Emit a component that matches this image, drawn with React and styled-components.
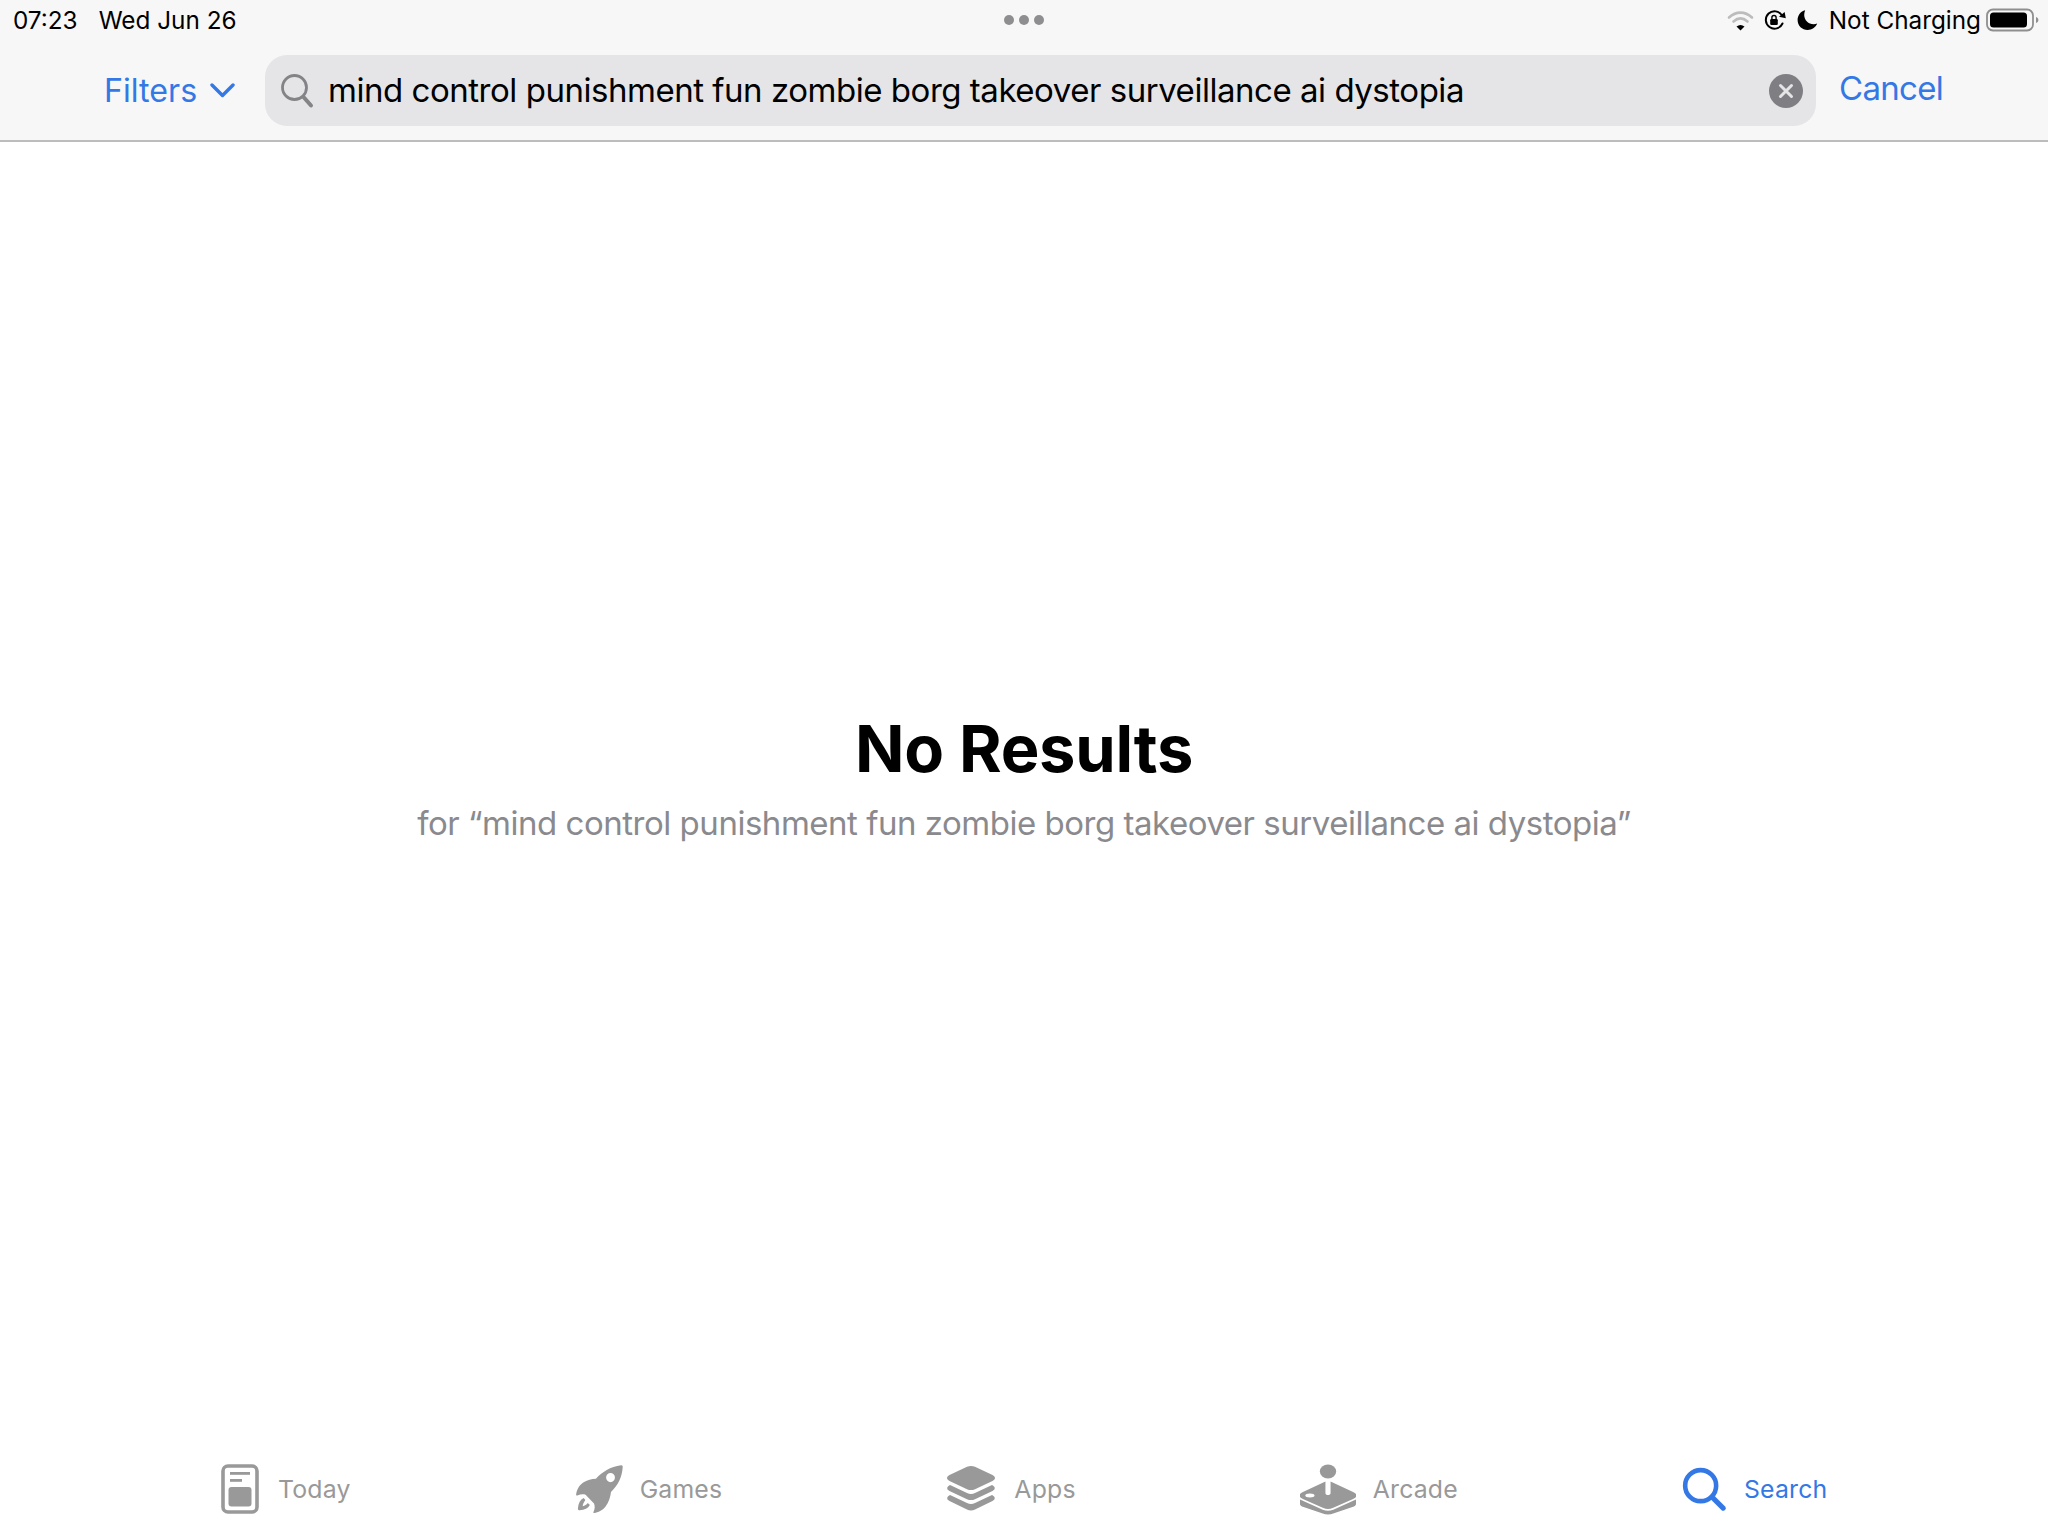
import styled, { createGlobalStyle } from 'styled-components';

const query = 'mind control punishment fun zombie borg takeover surveillance ai dystopia';
const blue = '#3478e6';
const tabGray = '#999999';

const GlobalStyle = createGlobalStyle`
  html, body {
    margin: 0;
    padding: 0;
    background: #fff;
  }

  body {
    font-family: Inter, 'Liberation Sans', sans-serif;
  }
`;

const Page = styled.div`
  width: 2048px;
  height: 1536px;
  display: flex;
  flex-direction: column;
  overflow: hidden;
`;

const Header = styled.header`
  height: 140px;
  background: #f7f7f7;
  border-bottom: 2px solid #bdbdbf;
  flex-shrink: 0;
`;

const StatusBar = styled.div`
  height: 38px;
  padding: 1px 9px 0 13px;
  display: grid;
  grid-template-columns: 1fr auto 1fr;
  align-items: center;
  font-size: 24.3px;
  color: #000;
`;

const StatusLeft = styled.div`
  display: flex;
  gap: 21px;
`;

const Dots = styled.div`
  display: flex;
  gap: 5px;
  margin-left: -4px;
`;

const Dot = styled.span`
  width: 10px;
  height: 10px;
  border-radius: 50%;
  background: #8e8e90;
`;

const StatusRight = styled.div`
  display: flex;
  align-items: center;
  justify-content: flex-end;
`;

const StatusIcon = styled.svg`
  display: block;
  margin-right: ${({ $gap }) => $gap}px;
`;

const ChargingLabel = styled.span`
  margin-right: 5px;
`;

const SearchRow = styled.div`
  height: 71px;
  margin-top: 16px;
  padding-left: 104px;
  display: flex;
  align-items: center;
`;

const FiltersButton = styled.div`
  width: 161px;
  display: flex;
  align-items: center;
  gap: 13px;
  color: ${blue};
  font-size: 32.2px;
  margin-top: -1px;
`;

const SearchField = styled.div`
  width: 1551px;
  height: 71px;
  padding: 0 13px 0 15px;
  box-sizing: border-box;
  display: flex;
  align-items: center;
  background: #e5e5e7;
  border-radius: 22px;
`;

const QueryText = styled.div`
  flex: 1;
  margin-left: 14px;
  margin-top: -1px;
  font-size: 33px;
  letter-spacing: -0.47px;
  color: #000;
  white-space: nowrap;
`;

const CancelButton = styled.div`
  margin-left: 23px;
  color: ${blue};
  font-size: 33px;
  letter-spacing: -0.7px;
  line-height: 71px;
  margin-top: -4px;
`;

const Main = styled.main`
  flex: 1;
  padding-top: 570px;
  display: flex;
  flex-direction: column;
  align-items: center;
`;

const Title = styled.h1`
  margin: 0;
  font-size: 65px;
  line-height: 74px;
  font-weight: 700;
  letter-spacing: -0.25px;
  color: #000;
`;

const Subtitle = styled.p`
  margin: 16px 0 0;
  font-size: 33px;
  line-height: 42px;
  letter-spacing: -0.48px;
  color: #8a8a8e;
  white-space: nowrap;
`;

const TabBar = styled.nav`
  height: 96px;
  padding-left: 221px;
  flex-shrink: 0;
  display: flex;
  gap: 224px;
  align-items: center;
`;

const TabItem = styled.div`
  display: flex;
  align-items: center;
  gap: ${({ $gap }) => $gap}px;
  color: ${({ $active }) => ($active ? blue : tabGray)};
  font-size: 24.8px;
  letter-spacing: 0.2px;
  margin-top: 1px;
`;

const TabIcon = styled.svg`
  display: block;
  flex-shrink: 0;
`;

const WifiIcon = () => (
  <StatusIcon $gap={9} width="27" height="22" viewBox="0 0 27 22" fill="none">
    <path d="M2 8.5C9 2 18 2 25 8.5" stroke="#bcbcbc" strokeWidth="2.6" strokeLinecap="round" />
    <path d="M6.5 12.5C11 8.6 16 8.6 20.5 12.5" stroke="#bcbcbc" strokeWidth="2.6" strokeLinecap="round" />
    <path d="M9.5 17.4L13.5 21.5L17.5 17.4C15 15.4 12 15.4 9.5 17.4Z" fill="#000" />
  </StatusIcon>
);

const RotationLockIcon = () => (
  <StatusIcon $gap={10} width="24" height="22" viewBox="0 0 24 22" fill="none">
    <path d="M19.5 14.5A8.7 8.7 0 1 1 19 6.5" stroke="#000" strokeWidth="2" strokeLinecap="round" />
    <path d="M16 7.8L22.8 9.2L21.6 3Z" fill="#000" />
    <rect x="7.2" y="10" width="7.6" height="6" rx="1.2" fill="#000" />
    <path d="M8.9 10.4V8.6A2.1 2.1 0 0 1 13.1 8.6V10.4" stroke="#000" strokeWidth="1.4" />
  </StatusIcon>
);

const MoonIcon = () => (
  <StatusIcon $gap={11} width="21" height="22" viewBox="0 0 21 22">
    <path d="M8.2 1.2C3.6 2.3 .6 6.2 .6 11c0 5.7 4.5 10 10 10 4.2 0 7.9-2.5 9.6-6.4-1.1.4-2.3.6-3.5.6-5.3 0-9.5-4.1-9.5-9.2 0-1.7.4-3.3 1-4.8Z" fill="#000" />
  </StatusIcon>
);

const BatteryIcon = () => (
  <StatusIcon $gap={0} width="53" height="24" viewBox="0 0 53 24" fill="none">
    <rect x="1" y="1.5" width="46" height="21" rx="6" stroke="#8f8f8f" strokeWidth="1.8" />
    <rect x="4" y="4.5" width="37" height="15" rx="3.5" fill="#000" />
    <path d="M50 9V15C51.6 14.4 52.4 13.3 52.4 12S51.6 9.6 50 9Z" fill="#8f8f8f" />
  </StatusIcon>
);

const ChevronIcon = () => (
  <svg width="25" height="15" viewBox="0 0 25 15" fill="none">
    <path d="M2 2L12.5 12.5L23 2" stroke={blue} strokeWidth="3.4" strokeLinecap="round" strokeLinejoin="round" />
  </svg>
);

const FieldSearchIcon = () => (
  <svg width="34" height="36" viewBox="0 0 34 36" fill="none">
    <circle cx="14.5" cy="14.5" r="12" stroke="#848488" strokeWidth="2.8" />
    <path d="M23.5 24L31 32.5" stroke="#848488" strokeWidth="4" strokeLinecap="round" />
  </svg>
);

const ClearIcon = () => (
  <svg width="34" height="34" viewBox="0 0 34 34">
    <circle cx="17" cy="17" r="17" fill="#7f7f83" />
    <path d="M11.5 11.5L22.5 22.5M22.5 11.5L11.5 22.5" stroke="#e5e5e7" strokeWidth="3" strokeLinecap="round" />
  </svg>
);

const TodayIcon = () => (
  <TabIcon width="38" height="50" viewBox="0 0 38 50">
    <rect x="2" y="2" width="34" height="46" rx="5" fill="none" stroke={tabGray} strokeWidth="3.6" />
    <rect x="9" y="8" width="20" height="2.8" fill={tabGray} />
    <rect x="9" y="15" width="12" height="2.8" fill={tabGray} />
    <rect x="7.5" y="23" width="23" height="19.5" rx="3" fill={tabGray} />
  </TabIcon>
);

const GamesIcon = () => (
  <TabIcon width="48" height="50" viewBox="0 0 50 50" preserveAspectRatio="none">
    <path
      fillRule="evenodd"
      fill={tabGray}
      d="M48 1.2C49.2 1 49.8 1.8 49.7 3C49 13 45 21 37.5 28C36.8 33 35.5 38 31.5 43C29 46 24 48.5 20 49C19.2 49 18.9 48.4 19.3 47.7C20.8 45 20.9 42.3 19.8 39.5L11 30.7C8 30 5.3 30.5 2.5 31.5C1.6 31.8 1 31.2 1.2 30.3C2 25 5 20.5 9.5 18C13 16 17 15 21.8 14.8C28 8 37 2.5 48 1.2ZM37 9A4.6 4.6 0 1 0 37 18.2A4.6 4.6 0 1 0 37 9Z"
    />
    <path d="M9 34C5.5 35.5 3.5 39 3 44.5C3 45.8 3.8 46.5 5 46.2C10 46 13.6 44.5 15.5 41L13.3 39C12 40.8 10.2 41.8 8 42.2C8.2 40.2 9 38.5 10.8 36Z" fill={tabGray} />
  </TabIcon>
);

const AppsIcon = () => (
  <TabIcon width="50" height="48" viewBox="0 0 50 48">
    <path d="M21 1.8C23.6.6 26.4.6 29 1.8L46.5 10C49.8 11.6 49.8 14.4 46.5 16L29 24.2C26.4 25.4 23.6 25.4 21 24.2L3.5 16C.2 14.4.2 11.6 3.5 10Z" fill={tabGray} />
    <path d="M4 20L21 28C23.6 29.2 26.4 29.2 29 28L46 20C49.6 21.8 49.6 24.4 46.5 26L29 34.2C26.4 35.4 23.6 35.4 21 34.2L3.5 26C.4 24.4.4 21.8 4 20Z" fill={tabGray} />
    <path d="M4 30L21 38C23.6 39.2 26.4 39.2 29 38L46 30C49.6 31.8 49.6 34.4 46.5 36L29 44.6C26.4 45.8 23.6 45.8 21 44.6L3.5 36C.4 34.4.4 31.8 4 30Z" fill={tabGray} />
  </TabIcon>
);

const ArcadeIcon = () => (
  <TabIcon width="56" height="52" viewBox="3 0 48 52" preserveAspectRatio="none">
    <circle cx="27" cy="8.5" r="7" fill={tabGray} />
    <path
      fillRule="evenodd"
      fill={tabGray}
      d="M24.8 18.5V30C24.8 31.4 25.8 32 27 32S29.2 31.4 29.2 30V18.5L48.5 29C52.5 31.2 52.5 33.8 48.5 36L31 45C28.4 46.2 25.6 46.2 23 45L5.5 36C1.5 33.8 1.5 31.2 5.5 29ZM11.5 30.5C9 30.5 7.5 31.4 7.5 32.5S9 34.5 11.5 34.5 15.5 33.6 15.5 32.5 14 30.5 11.5 30.5Z"
    />
    <path d="M3 36.5L22.5 46.8C25.4 48.2 28.6 48.2 31.5 46.8L51 36.5V41C51 42 50.4 42.8 49.2 43.4L31.5 50.6C28.6 51.8 25.4 51.8 22.5 50.6L4.8 43.4C3.6 42.8 3 42 3 41Z" fill={tabGray} />
  </TabIcon>
);

const SearchTabIcon = () => (
  <TabIcon width="44" height="46" viewBox="0 0 46 46" fill="none">
    <circle cx="19.5" cy="19.5" r="16.2" stroke={blue} strokeWidth="4.8" />
    <path d="M31.5 31.5L43 43" stroke={blue} strokeWidth="5.2" strokeLinecap="round" />
  </TabIcon>
);

const tabs = [
  { label: 'Today', icon: <TodayIcon />, gap: 19 },
  { label: 'Games', icon: <GamesIcon />, gap: 17 },
  { label: 'Apps', icon: <AppsIcon />, gap: 18 },
  { label: 'Arcade', icon: <ArcadeIcon />, gap: 17 },
  { label: 'Search', icon: <SearchTabIcon />, gap: 18, active: true },
];

const App = () => {
  return (
    <Page>
      <GlobalStyle />
      <Header>
        <StatusBar>
          <StatusLeft>
            <span>07:23</span>
            <span>Wed Jun 26</span>
          </StatusLeft>
          <Dots>
            <Dot />
            <Dot />
            <Dot />
          </Dots>
          <StatusRight>
            <WifiIcon />
            <RotationLockIcon />
            <MoonIcon />
            <ChargingLabel>Not Charging</ChargingLabel>
            <BatteryIcon />
          </StatusRight>
        </StatusBar>
        <SearchRow>
          <FiltersButton>
            Filters
            <ChevronIcon />
          </FiltersButton>
          <SearchField>
            <FieldSearchIcon />
            <QueryText>{query}</QueryText>
            <ClearIcon />
          </SearchField>
          <CancelButton>Cancel</CancelButton>
        </SearchRow>
      </Header>
      <Main>
        <Title>No Results</Title>
        <Subtitle>for “{query}”</Subtitle>
      </Main>
      <TabBar>
        {tabs.map(tab => (
          <TabItem key={tab.label} $gap={tab.gap} $active={tab.active}>
            {tab.icon}
            {tab.label}
          </TabItem>
        ))}
      </TabBar>
    </Page>
  );
};

export default App;
